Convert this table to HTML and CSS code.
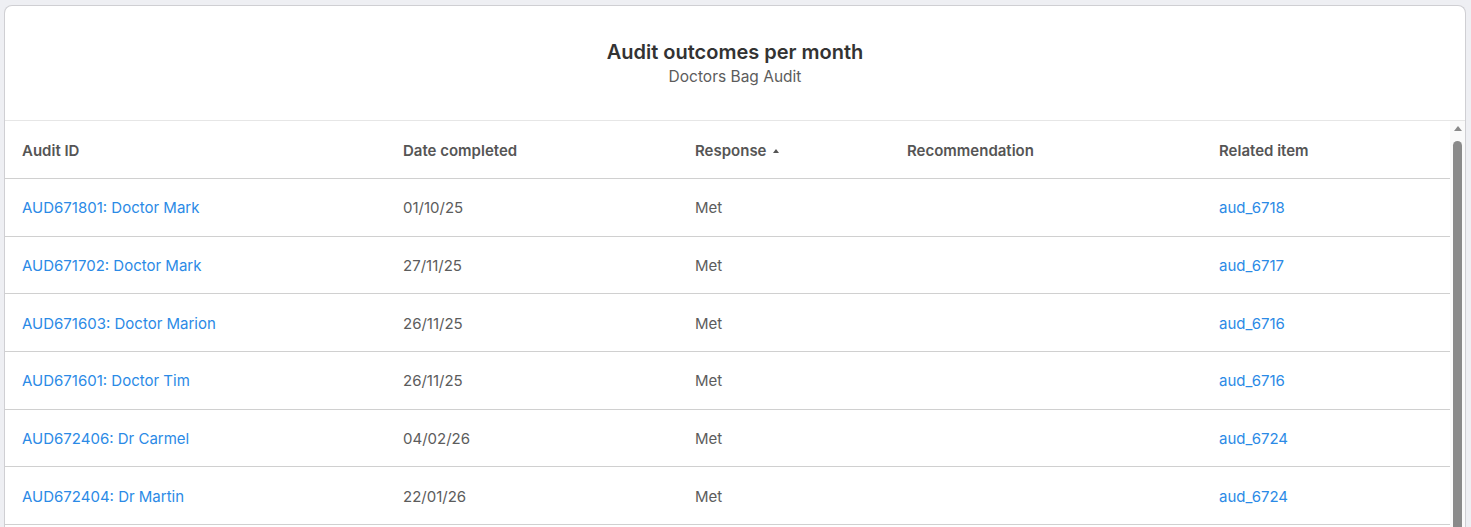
FILE: index.html
```html
<!DOCTYPE html>
<html>
<head>
<meta charset="utf-8">
<link rel="stylesheet" href="styles.css">
</head>
<body>
<div class="card">
  <div class="card-header">
    <div class="title">Audit outcomes per month</div>
    <div class="subtitle">Doctors Bag Audit</div>
  </div>
  <div class="body">
    <div class="viewport">
      <table class="grid">
        <colgroup>
          <col class="c1"><col class="c2"><col class="c3"><col class="c4"><col class="c5">
        </colgroup>
        <thead>
          <tr>
            <th>Audit ID</th>
            <th>Date completed</th>
            <th><span class="sort">Response <span class="arrow"></span></span></th>
            <th>Recommendation</th>
            <th>Related item</th>
          </tr>
        </thead>
        <tbody>
          <tr><td><a href="#">AUD671801: Doctor Mark</a></td><td>01/10/25</td><td>Met</td><td></td><td><a href="#">aud_6718</a></td></tr>
          <tr><td><a href="#">AUD671702: Doctor Mark</a></td><td>27/11/25</td><td>Met</td><td></td><td><a href="#">aud_6717</a></td></tr>
          <tr><td><a href="#">AUD671603: Doctor Marion</a></td><td>26/11/25</td><td>Met</td><td></td><td><a href="#">aud_6716</a></td></tr>
          <tr><td><a href="#">AUD671601: Doctor Tim</a></td><td>26/11/25</td><td>Met</td><td></td><td><a href="#">aud_6716</a></td></tr>
          <tr><td><a href="#">AUD672406: Dr Carmel</a></td><td>04/02/26</td><td>Met</td><td></td><td><a href="#">aud_6724</a></td></tr>
          <tr><td><a href="#">AUD672404: Dr Martin</a></td><td>22/01/26</td><td>Met</td><td></td><td><a href="#">aud_6724</a></td></tr>
        </tbody>
      </table>
    </div>
    <div class="scrollbar">
      <div class="sb-arrow"></div>
      <div class="sb-thumb"></div>
    </div>
  </div>
</div>
</body>
</html>
```
FILE: styles.css
```css
html, body {
  margin: 0;
  padding: 0;
  background: #eeeff3;
  height: 527px;
  overflow: hidden;
}
body {
  padding: 5px 5px 0 4px;
  box-sizing: border-box;
  font-family: "Inter", "Liberation Sans", sans-serif;
  color: #555;
}
.card {
  background: #fff;
  border: 1px solid #cfcfd3;
  border-bottom: none;
  border-radius: 8px 8px 0 0;
  height: 522px;
  overflow: hidden;
  display: flex;
  flex-direction: column;
}
.card-header {
  height: 115px;
  flex: none;
  border-bottom: 1px solid #e6e6e6;
  display: flex;
  flex-direction: column;
  align-items: center;
  padding-top: 33px;
  box-sizing: border-box;
}
.title {
  font-size: 20px;
  font-weight: 600;
  color: #333;
  line-height: 26px;
}
.subtitle {
  font-size: 15.5px;
  color: #5c5c5c;
  line-height: 20px;
  margin-top: 2px;
}
.body {
  flex: 1;
  display: flex;
  min-height: 0;
}
.viewport {
  flex: 1;
  overflow: hidden;
}
.grid {
  width: 100%;
  border-collapse: collapse;
  table-layout: fixed;
  font-size: 15px;
}
.c1 { width: 381px; }
.c2 { width: 292px; }
.c3 { width: 212px; }
.c4 { width: 312px; }
.grid th {
  text-align: left;
  font-weight: 600;
  color: #555;
  height: 56px;
  padding: 1px 0 0 17px;
  border-bottom: 1px solid #d0d0d0;
}
.grid td {
  height: 55.67px;
  padding: 1px 0 0 17px;
  border-bottom: 1px solid #d0d0d0;
  color: #5c5c5c;
  white-space: nowrap;
}
.grid a {
  color: #2b8ae6;
  text-decoration: none;
}
.sort {
  display: inline-flex;
  align-items: center;
  gap: 7px;
}
.arrow {
  width: 0;
  height: 0;
  border-left: 3.5px solid transparent;
  border-right: 3.5px solid transparent;
  border-bottom: 4px solid #555;
  margin-top: 2px;
}
.scrollbar {
  width: 15px;
  flex: none;
  background: #fafafa;
  display: flex;
  flex-direction: column;
  align-items: center;
  padding-top: 5px;
  box-sizing: border-box;
}
.sb-arrow {
  width: 0;
  height: 0;
  border-left: 4px solid transparent;
  border-right: 4px solid transparent;
  border-bottom: 5px solid #8a8a8a;
}
.sb-thumb {
  margin-top: 10px;
  width: 9px;
  flex: 1;
  background: #8a8a8a;
  border-radius: 5px 5px 0 0;
}
```
